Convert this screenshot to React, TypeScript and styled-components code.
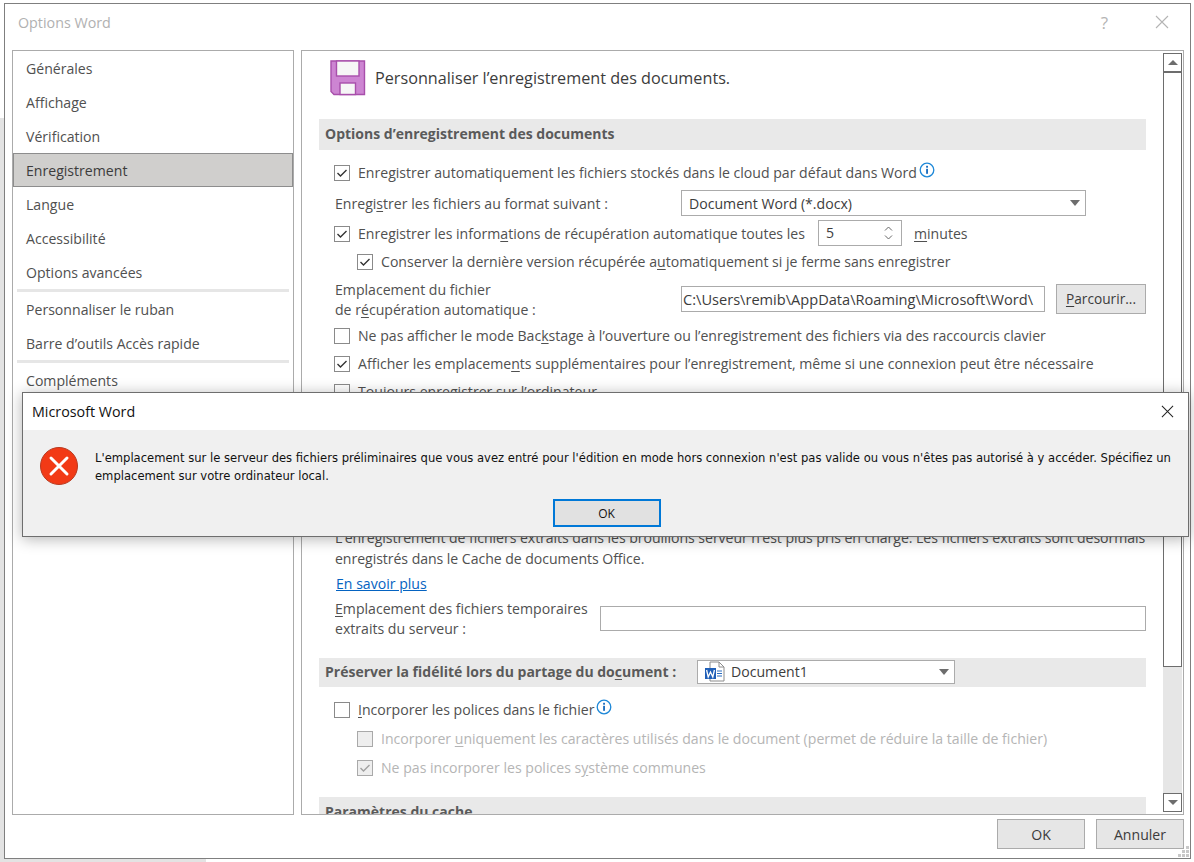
import React from 'react'
import styled, { createGlobalStyle } from 'styled-components'

const FONT = '"Open Sans", "Noto Sans", "Liberation Sans", sans-serif'

const Global = createGlobalStyle`
  html, body {
    margin: 0;
    padding: 0;
    background: #fff;
  }
  body {
    font-family: ${FONT};
    font-size: 14.1px;
    color: #505050;
  }
  u {
    text-underline-offset: 2px;
  }
`

const Page = styled.div`
  position: relative;
  width: 1194px;
  height: 862px;
  overflow: hidden;
  box-sizing: border-box;
  padding: 3px 2px 3px 4px;
  background:
    linear-gradient(#e3e3e3, #e3e3e3) left 118px / 4px 100% no-repeat,
    linear-gradient(#e3e3e3, #e3e3e3) left bottom / 206px 3px no-repeat,
    #fff;
`

const Window = styled.div`
  position: relative;
  width: 1187px;
  height: 856px;
  box-sizing: border-box;
  border: 1px solid #7f7f7f;
  background: #fff;
  display: flex;
  flex-direction: column;
`

const TitleBar = styled.div`
  height: 46px;
  flex: none;
  box-sizing: border-box;
  display: flex;
  align-items: center;
  padding: 0 21px 10px 13px;
  color: #b1b1b1;
  font-size: 14.3px;
`

const TitleText = styled.div`
  flex: 1;
`

const HelpMark = styled.span`
  font-size: 17px;
  color: #b4b4b4;
  margin-right: 47px;
`

const Main = styled.div`
  height: 765px;
  flex: none;
  display: flex;
  gap: 7px;
  padding: 0 6px 0 7px;
`

const Sidebar = styled.div`
  width: 282px;
  flex: none;
  box-sizing: border-box;
  border: 1px solid #ababab;
  display: flex;
  flex-direction: column;
`

const NavItem = styled.div<{ $active?: boolean }>`
  height: 34px;
  flex: none;
  box-sizing: border-box;
  display: flex;
  align-items: center;
  padding-left: ${p => (p.$active ? 12 : 13)}px;
  color: ${p => (p.$active ? '#3c3c3c' : '#505050')};
  background: ${p => (p.$active ? '#d0cfcd' : 'transparent')};
  border: ${p => (p.$active ? '1px solid #8d8d8d' : 'none')};
`

const NavDivider = styled.div`
  height: 3px;
  flex: none;
  margin: 0 4px;
  background: #e6e6e6;
`

const Panel = styled.div`
  flex: 1;
  min-width: 0;
  box-sizing: border-box;
  border: 1px solid #ababab;
  display: flex;
  overflow: hidden;
`

const Body = styled.div`
  flex: 1;
  min-width: 0;
  padding: 0 17px;
  overflow: hidden;
`

const Heading = styled.div`
  height: 68px;
  display: flex;
  align-items: flex-start;
  gap: 9px;
  padding: 9px 0 0 11px;
  box-sizing: border-box;
  color: #3c3c3c;
  font-size: 16.2px;
`

const HeadingText = styled.span`
  line-height: 36px;
`

const Section = styled.div<{ $h: number }>`
  height: ${p => p.$h}px;
  box-sizing: border-box;
  background: #e9e9e9;
  display: flex;
  align-items: center;
  padding: 0 0 2px 6px;
  font-weight: 700;
  color: #5a5a5a;
  font-size: 14px;
`

const Row = styled.div<{ $h: number; $indent?: number; $disabled?: boolean }>`
  height: ${p => p.$h}px;
  display: flex;
  align-items: center;
  padding-left: ${p => p.$indent ?? 15}px;
  color: ${p => (p.$disabled ? '#b5b5b5' : '#505050')};
  white-space: nowrap;
`

const Gap = styled.div<{ $h: number }>`
  height: ${p => p.$h}px;
`

const Box = styled.span<{ $disabled?: boolean }>`
  width: 16px;
  height: 16px;
  flex: none;
  box-sizing: border-box;
  margin-right: 8px;
  border: 1px solid ${p => (p.$disabled ? '#a9a9a9' : '#8a8a8a')};
  background: ${p => (p.$disabled ? '#eeeeee' : '#fff')};
  display: flex;
  align-items: center;
  justify-content: center;
`

const Label = styled.span<{ $w?: number }>`
  flex: none;
  width: ${p => (p.$w ? `${p.$w}px` : 'auto')};
  line-height: 20px;
`

const Field = styled.div<{ $w?: number; $h?: number }>`
  width: ${p => (p.$w ? `${p.$w}px` : 'auto')};
  height: ${p => p.$h ?? 26}px;
  flex: ${p => (p.$w ? 'none' : '1')};
  box-sizing: border-box;
  margin-top: -2px;
  border: 1px solid #ababab;
  background: #fff;
  display: flex;
  align-items: center;
  padding: 0 5px 0 7px;
  color: #3c3c3c;
  justify-content: space-between;
`

const PathField = styled(Field)`
  padding-left: 1px;
  font-size: 14.6px;
`

const UnitLabel = styled(Label)`
  margin-left: 12px;
`

const Arrow = styled.span`
  width: 0;
  height: 0;
  border-left: 5px solid transparent;
  border-right: 5px solid transparent;
  border-top: 6px solid #6d6d6d;
`

const Spin = styled.span`
  display: flex;
  flex-direction: column;
  gap: 4px;
  margin-right: 3px;
`

const Browse = styled.button`
  width: 90px;
  height: 30px;
  flex: none;
  margin: -2px 0 0 11px;
  padding: 0;
  box-sizing: border-box;
  border: 1px solid #ababab;
  background: #e6e6e6;
  color: #3c3c3c;
  font-family: ${FONT};
  font-size: 13.7px;
`

const Para = styled.div`
  margin-left: 16px;
  line-height: 21px;
  white-space: nowrap;
  letter-spacing: -0.05px;
`

const Link = styled.a`
  margin-left: 1px;
  color: #0563c1;
  text-decoration: underline;
`

const DocPicker = styled(Field)`
  font-weight: 400;
  font-size: 14.1px;
  margin-top: 0;
  padding-left: 6px;
`

const DocName = styled.span`
  display: flex;
  align-items: center;
  gap: 6px;
`

const SectionLabel = styled.span`
  width: 372px;
  flex: none;
`

const Scrollbar = styled.div`
  width: 19px;
  flex: none;
  margin: 2px 1px 2px 0;
  background: #e6e6e6;
  display: flex;
  flex-direction: column;
`

const ScrollButton = styled.div`
  height: 19px;
  flex: none;
  box-sizing: border-box;
  border: 1px solid #6d6d6d;
  background: #fff;
  display: flex;
  align-items: center;
  justify-content: center;
`

const Thumb = styled.div`
  height: 595px;
  flex: none;
  box-sizing: border-box;
  border: 1px solid #6d6d6d;
  background: #fff;
`

const ScrollTrack = styled.div`
  flex: 1;
`

const Tri = styled.span<{ $up?: boolean }>`
  width: 0;
  height: 0;
  border-left: 5px solid transparent;
  border-right: 5px solid transparent;
  border-${p => (p.$up ? 'bottom' : 'top')}: 5px solid #6d6d6d;
`

const Footer = styled.div`
  flex: 1;
  display: flex;
  justify-content: flex-end;
  gap: 11px;
  padding: 4px 6px 0 0;
`

const FooterButton = styled.button`
  width: 88px;
  height: 30px;
  padding: 0;
  box-sizing: border-box;
  border: 1px solid #ababab;
  background: #e6e6e6;
  color: #3c3c3c;
  font-family: ${FONT};
  font-size: 14.1px;
`

const Grip = styled.svg`
  position: absolute;
  right: 0;
  bottom: 0;
`

const Alert = styled.div`
  position: absolute;
  left: 22px;
  top: 392px;
  width: 1167px;
  height: 145px;
  box-sizing: border-box;
  border: 1px solid #6e6e6e;
  background: #f0f0f0;
  box-shadow: 0 2px 14px rgba(0, 0, 0, 0.3);
  display: flex;
  flex-direction: column;
`

const AlertTitle = styled.div`
  height: 37px;
  flex: none;
  background: #fff;
  display: flex;
  align-items: center;
  justify-content: space-between;
  padding: 0 14px 0 9px;
  color: #111;
  font-size: 14.3px;
`

const AlertBody = styled.div`
  display: flex;
  padding: 17px 0 0 17px;
  gap: 17px;
  height: 69px;
  box-sizing: border-box;
`

const AlertText = styled.div`
  width: 1085px;
  color: #111;
  font-family: "DejaVu Sans", sans-serif;
  font-size: 11.58px;
  line-height: 17.5px;
  padding-top: 3px;
`

const AlertFooter = styled.div`
  display: flex;
  justify-content: center;
  padding-left: 2px;
`

const AlertOk = styled.button`
  width: 108px;
  height: 28px;
  padding: 0;
  box-sizing: border-box;
  border: 2px solid #0078d7;
  background: #e1e1e1;
  color: #111;
  font-family: ${FONT};
  font-size: 12px;
`

const Check = ({ color = '#333' }: { color?: string }) => (
  <svg width="12" height="10" viewBox="0 0 12 10">
    <path d="M1.5 5 L4.5 8 L10.5 2" fill="none" stroke={color} strokeWidth="1.4" />
  </svg>
)

const CheckBox = ({ on, disabled }: { on?: boolean; disabled?: boolean }) => (
  <Box $disabled={disabled}>{on && <Check color={disabled ? '#a0a0a0' : '#333'} />}</Box>
)

const InfoSvg = styled.svg`
  margin: -6px 0 0 2px;
`

const InfoIcon = () => (
  <InfoSvg width="16" height="16" viewBox="0 0 16 16">
    <circle cx="8" cy="8" r="6.8" fill="#fff" stroke="#1e88d8" strokeWidth="1.3" />
    <rect x="7.1" y="3.8" width="1.9" height="1.9" fill="#1e70c0" />
    <rect x="7.1" y="6.8" width="1.9" height="5" fill="#1e70c0" />
  </InfoSvg>
)

const SaveIcon = () => (
  <svg width="36" height="36" viewBox="0 0 36 36">
    <path d="M1 1 H34.5 V34.5 H4 L1 31.5 Z" fill="#cd85d2" stroke="#a84fab" strokeWidth="1.4" />
    <rect x="6.5" y="1" width="22.5" height="15" fill="#f6f6f6" stroke="#a84fab" strokeWidth="1.4" />
    <rect x="10" y="23" width="15.5" height="11.5" fill="#f6f6f6" stroke="#a84fab" strokeWidth="1.4" />
  </svg>
)

const WordIcon = () => (
  <svg width="21" height="21" viewBox="0 0 21 21">
    <path d="M6 1 H15 L20 6 V20 H6 Z" fill="#fff" stroke="#8c8c8c" />
    <path d="M15 1 V6 H20" fill="none" stroke="#8c8c8c" />
    <path d="M13 10 H18 M13 12.5 H18 M13 15 H18" stroke="#2b6cc0" />
    <rect x="1" y="7" width="11" height="11" fill="#1f5fb8" />
    <path d="M2.6 9 L4.2 16 L6.5 11 L8.8 16 L10.4 9" fill="none" stroke="#fff" strokeWidth="1.3" />
  </svg>
)

const ErrorIcon = () => (
  <svg width="38" height="38" viewBox="0 0 38 38">
    <circle cx="19" cy="19" r="18.5" fill="#f23a16" stroke="#b8391f" />
    <path d="M11 11 L27 27 M27 11 L11 27" stroke="#fff" strokeWidth="3" strokeLinecap="round" />
  </svg>
)

const Cross = ({ size, color }: { size: number; color: string }) => (
  <svg width={size} height={size} viewBox="0 0 14 14">
    <path d="M1 1 L13 13 M13 1 L1 13" stroke={color} strokeWidth="1.1" />
  </svg>
)

const SpinArrow = ({ up }: { up?: boolean }) => (
  <svg width="9" height="5" viewBox="0 0 9 5">
    <path d={up ? 'M1 4.5 L4.5 1 L8 4.5' : 'M1 .5 L4.5 4 L8 .5'} fill="none" stroke="#666" />
  </svg>
)

const navTop = ['Générales', 'Affichage', 'Vérification', 'Enregistrement', 'Langue', 'Accessibilité', 'Options avancées']
const navMiddle = ['Personnaliser le ruban', 'Barre d’outils Accès rapide']

export default function App() {
  return (
    <Page>
      <Global />
      <Window>
        <TitleBar>
          <TitleText>Options Word</TitleText>
          <HelpMark>?</HelpMark>
          <Cross size={14} color="#b4b4b4" />
        </TitleBar>
        <Main>
          <Sidebar>
            {navTop.map(name => (
              <NavItem key={name} $active={name === 'Enregistrement'}>{name}</NavItem>
            ))}
            <NavDivider />
            {navMiddle.map(name => (
              <NavItem key={name}>{name}</NavItem>
            ))}
            <NavDivider />
            <NavItem>Compléments</NavItem>
          </Sidebar>
          <Panel>
            <Body>
              <Heading>
                <SaveIcon />
                <HeadingText>Personnaliser l’enregistrement des documents.</HeadingText>
              </Heading>
              <Section $h={31}>Options d’enregistrement des documents</Section>
              <Gap $h={8} />
              <Row $h={30}>
                <CheckBox on />
                <Label>Enregistrer automatiquement les fichiers stockés dans le cloud par défaut dans Word</Label>
                <InfoIcon />
              </Row>
              <Row $h={32} $indent={16}>
                <Label $w={346}>Enregi<u>s</u>trer les fichiers au format suivant :</Label>
                <Field $w={405}>Document Word (*.docx)<Arrow /></Field>
              </Row>
              <Row $h={27}>
                <CheckBox on />
                <Label $w={460}>Enregistrer les inform<u>a</u>tions de récupération automatique toutes les</Label>
                <Field $w={84}>
                  5
                  <Spin><SpinArrow up /><SpinArrow /></Spin>
                </Field>
                <UnitLabel><u>m</u>inutes</UnitLabel>
              </Row>
              <Row $h={30} $indent={38}>
                <CheckBox on />
                <Label>Conserver la dernière version récupérée a<u>u</u>tomatiquement si je ferme sans enregistrer</Label>
              </Row>
              <Row $h={45} $indent={16}>
                <Label $w={346}>Emplacement du fichier<br />de r<u>é</u>cupération automatique :</Label>
                <PathField $w={364}>C:\Users\remib\AppData\Roaming\Microsoft\Word\</PathField>
                <Browse><u>P</u>arcourir...</Browse>
              </Row>
              <Row $h={27}>
                <CheckBox />
                <Label>Ne pas afficher le mode Bac<u>k</u>stage à l’ouverture ou l’enregistrement des fichiers via des raccourcis clavier</Label>
              </Row>
              <Row $h={30}>
                <CheckBox on />
                <Label>Afficher les emplaceme<u>n</u>ts supplémentaires pour l’enregistrement, même si une connexion peut être nécessaire</Label>
              </Row>
              <Row $h={26}>
                <CheckBox />
                <Label>Toujours enregistrer sur l’ordinateur</Label>
              </Row>
              <Gap $h={122} />
              <Para>
                L’enregistrement de fichiers extraits dans les brouillons serveur n’est plus pris en charge. Les fichiers extraits sont désormais<br />
                enregistrés dans le Cache de documents Office.
              </Para>
              <Row $h={25} $indent={16} style={{ marginTop: 2 }}>
                <Link>En savoir plus</Link>
              </Row>
              <Row $h={42} $indent={16} style={{ marginTop: 2 }}>
                <Label $w={265}><u>E</u>mplacement des fichiers temporaires<br />extraits du serveur :</Label>
                <Field $h={25} />
              </Row>
              <Gap $h={18} />
              <Section $h={29}>
                <SectionLabel>Préserver la fidélité lors du partage du do<u>c</u>ument :</SectionLabel>
                <DocPicker $w={258} $h={24}>
                  <DocName><WordIcon />Document1</DocName>
                  <Arrow />
                </DocPicker>
              </Section>
              <Gap $h={8} />
              <Row $h={29}>
                <CheckBox />
                <Label><u>I</u>ncorporer les polices dans le fichier</Label>
                <InfoIcon />
              </Row>
              <Row $h={29} $indent={38} $disabled>
                <CheckBox disabled />
                <Label>Incorporer <u>u</u>niquement les caractères utilisés dans le document (permet de réduire la taille de fichier)</Label>
              </Row>
              <Row $h={29} $indent={38} $disabled>
                <CheckBox on disabled />
                <Label>Ne pas incorporer les polices s<u>y</u>stème communes</Label>
              </Row>
              <Gap $h={15} />
              <Section $h={31}>Paramètres du cache</Section>
            </Body>
            <Scrollbar>
              <ScrollButton><Tri $up /></ScrollButton>
              <Thumb />
              <ScrollTrack />
              <ScrollButton><Tri /></ScrollButton>
            </Scrollbar>
          </Panel>
        </Main>
        <Footer>
          <FooterButton>OK</FooterButton>
          <FooterButton>Annuler</FooterButton>
        </Footer>
        <Grip width="12" height="12" viewBox="0 0 12 12">
          <path d="M8 0h3v3H8zM4 4h3v3H4zM8 4h3v3H8zM0 8h3v3H0zM4 8h3v3H4zM8 8h3v3H8z" fill="#c8c8c8" />
        </Grip>
      </Window>
      <Alert>
        <AlertTitle>
          Microsoft Word
          <Cross size={13} color="#222" />
        </AlertTitle>
        <AlertBody>
          <ErrorIcon />
          <AlertText>
            L'emplacement sur le serveur des fichiers préliminaires que vous avez entré pour l'édition en mode hors connexion n'est pas valide ou vous n'êtes pas autorisé à y accéder. Spécifiez un emplacement sur votre ordinateur local.
          </AlertText>
        </AlertBody>
        <AlertFooter>
          <AlertOk>OK</AlertOk>
        </AlertFooter>
      </Alert>
    </Page>
  )
}
